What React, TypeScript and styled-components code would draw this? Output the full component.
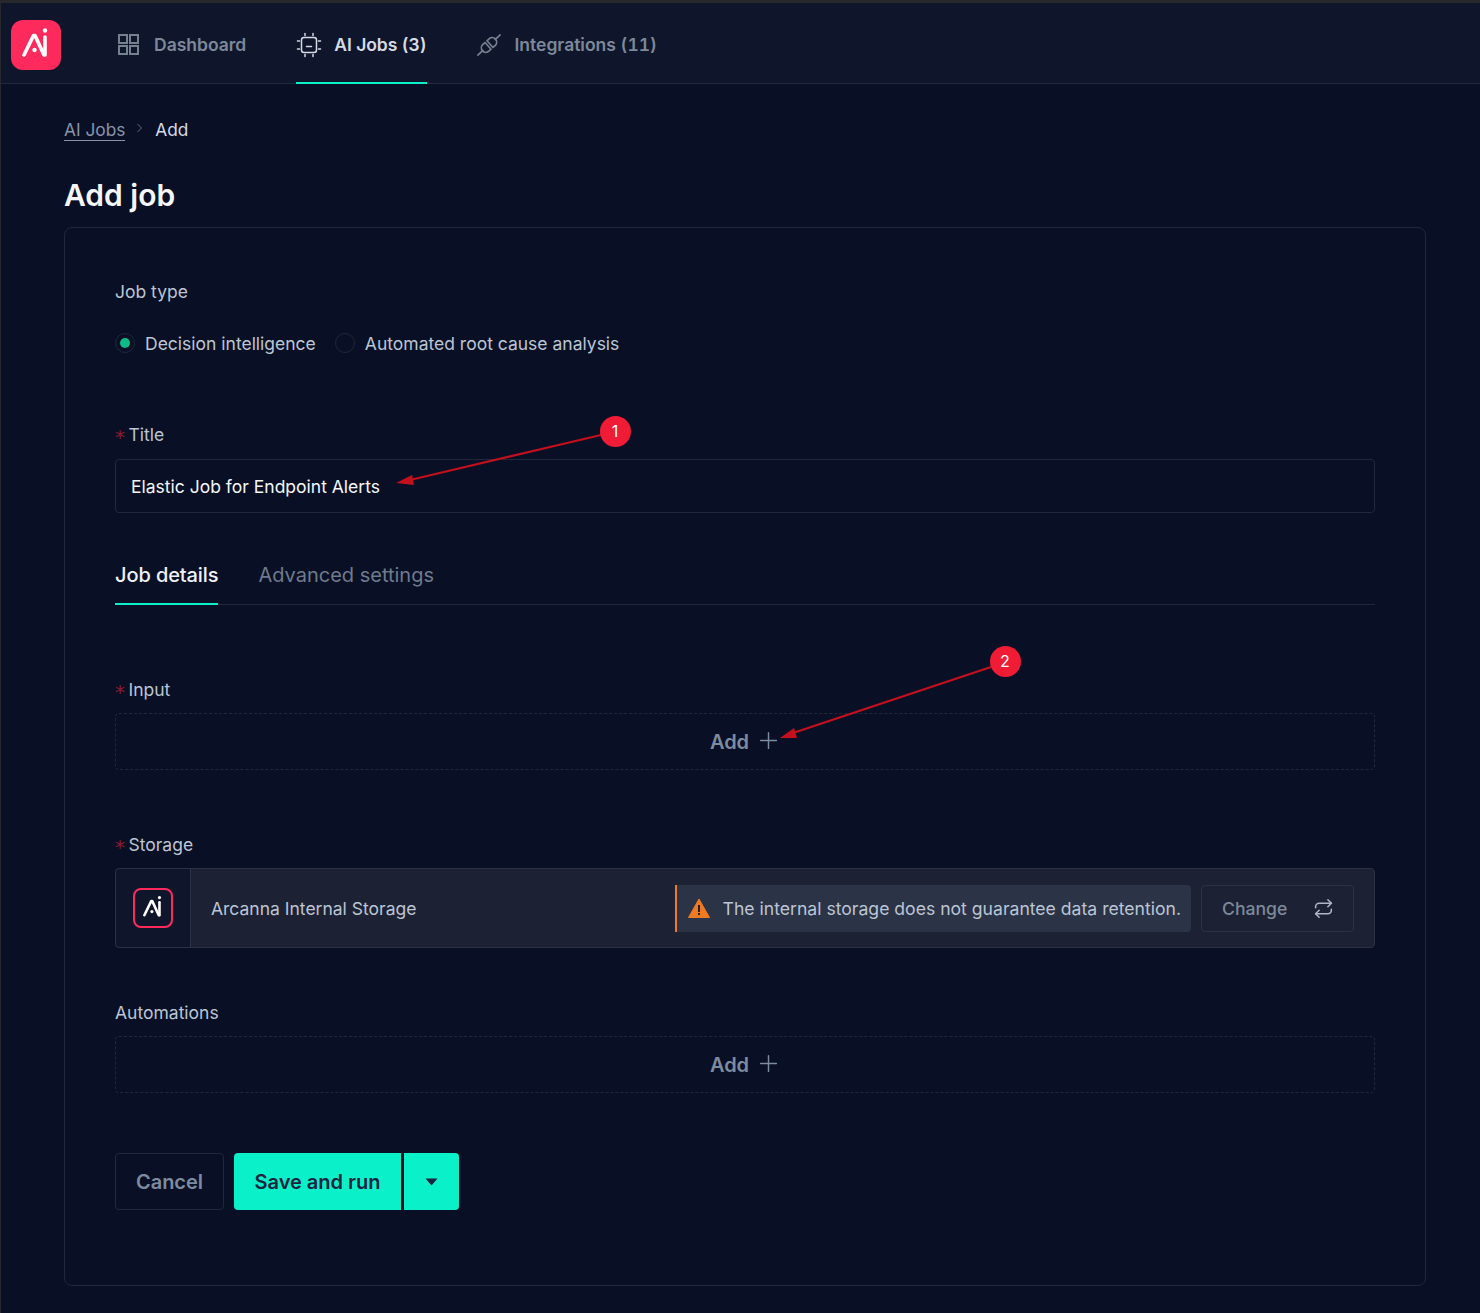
import React from "react";
import styled, { createGlobalStyle } from "styled-components";
import { Plus, Repeat } from "lucide-react";

const Logo = ({ size }: { size: number }) => (
  <svg width={size} height={size} viewBox="0 0 50 50" fill="none">
    <path d="M13 35 L22.5 15.5 L24 15.5 L33 35" stroke="#fff" strokeWidth="3.6" strokeLinecap="round" strokeLinejoin="round" />
    <path d="M34 35 V17" stroke="#fff" strokeWidth="3.6" strokeLinecap="round" />
    <circle cx="34" cy="10.5" r="2.2" fill="#fff" />
    <circle cx="23.5" cy="30" r="2.2" fill="#fff" />
  </svg>
);

const GridIcon = () => (
  <svg width="26" height="26" viewBox="0 0 26 26" fill="none" stroke="#76818f" strokeWidth="2">
    <rect x="3" y="3" width="8" height="8" />
    <rect x="14" y="3" width="8" height="8" />
    <rect x="3" y="14" width="8" height="8" />
    <rect x="14" y="14" width="8" height="8" />
  </svg>
);

const ChipIcon = () => (
  <svg width="26" height="26" viewBox="0 0 26 26" fill="none" stroke="#d5dbe5" strokeWidth="1.5" strokeLinecap="round">
    <rect x="5.5" y="5.5" width="15" height="15" rx="2.5" />
    <path d="M10.5 14.5h5" />
    <path d="M9 1.5v2M17 1.5v2M9 22.5v2M17 22.5v2M1.5 9h2M1.5 17h2M22.5 9h2M22.5 17h2" />
  </svg>
);

const PlugIcon = () => (
  <PlugSvg width="28" height="28" viewBox="-2 -2 28 28" fill="none" stroke="#76818f" strokeWidth="1.7" strokeLinecap="round" strokeLinejoin="round">
    <g transform="rotate(-42 12 12)">
      <path d="M-3 12H3.5" />
      <path d="M10.7 7.5H7.8a4.5 4.5 0 0 0 0 9h2.9z" />
      <path d="M13.3 7.5h2.9a4.5 4.5 0 0 1 0 9h-2.9z" />
      <path d="M20.5 12H27" />
    </g>
  </PlugSvg>
);

const WarnIcon = () => (
  <svg width="22" height="20" viewBox="0 0 22 20">
    <path d="M11 1 L21.5 19.5 H0.5 Z" fill="#f07a22" stroke="#f07a22" strokeLinejoin="round" />
    <rect x="10" y="7" width="2" height="7" fill="#1c2234" />
    <rect x="10" y="15" width="2" height="2" fill="#1c2234" />
  </svg>
);

const App = () => {
  return (
    <Page>
      <GlobalStyle />
      <TopBar>
        <LogoTile>
          <Logo size={50} />
        </LogoTile>
        <Nav>
          <NavItem>
            <GridIcon />
            Dashboard
          </NavItem>
          <NavItem $active>
            <ChipIcon />
            AI Jobs (3)
          </NavItem>
          <NavItem>
            <PlugIcon />
            Integrations (11)
          </NavItem>
        </Nav>
      </TopBar>

      <Content>
        <Breadcrumb>
          <CrumbLink>AI Jobs</CrumbLink>
          <CrumbSep>
            <svg width="7" height="10" viewBox="0 0 7 10" fill="none" stroke="#5f6a7c" strokeWidth="1">
              <path d="M1.5 1l4 4-4 4" />
            </svg>
          </CrumbSep>
          <CrumbCurrent>Add</CrumbCurrent>
        </Breadcrumb>
        <PageTitle>Add job</PageTitle>

        <Card>
          <JobTypeLabel>Job type</JobTypeLabel>
          <RadioRow>
            <RadioOption>
              <RadioDot $checked />
              Decision intelligence
            </RadioOption>
            <RadioOption>
              <RadioDot />
              Automated root cause analysis
            </RadioOption>
          </RadioRow>

          <TitleLabel>
            <Star>*</Star>Title
          </TitleLabel>
          <TextField>Elastic Job for Endpoint Alerts</TextField>

          <Tabs>
            <Tab $active>Job details</Tab>
            <Tab>Advanced settings</Tab>
          </Tabs>

          <InputLabel>
            <Star>*</Star>Input
          </InputLabel>
          <AddBox>
            Add <Plus size={27} strokeWidth={1.3} />
          </AddBox>

          <StorageLabel>
            <Star>*</Star>Storage
          </StorageLabel>
          <StorageBox>
            <StorageLogoCell>
              <StorageLogo>
                <Logo size={36} />
              </StorageLogo>
            </StorageLogoCell>
            <StorageName>Arcanna Internal Storage</StorageName>
            <Warning>
              <WarnIcon />
              The internal storage does not guarantee data retention.
            </Warning>
            <ChangeButton>
              Change <Repeat size={21} strokeWidth={1.8} color="#aeb6c4" />
            </ChangeButton>
          </StorageBox>

          <AutomationsLabel>Automations</AutomationsLabel>
          <AddBox>
            Add <Plus size={27} strokeWidth={1.3} />
          </AddBox>

          <Actions>
            <CancelButton>Cancel</CancelButton>
            <SaveButton>Save and run</SaveButton>
            <CaretButton>
              <svg width="13" height="8" viewBox="0 0 13 8">
                <path d="M0.5 0.5h12L6.5 7.5z" fill="#1a2440" />
              </svg>
            </CaretButton>
          </Actions>
        </Card>
      </Content>

      <Arrows width="1480" height="1313" viewBox="0 0 1480 1313">
        <path d="M601 435 L410 480" stroke="#c40f1c" strokeWidth="2.2" />
        <path d="M396 483 L412 475 L414 485 Z" fill="#c40f1c" />
        <path d="M991 667 L793 733" stroke="#c40f1c" strokeWidth="2.2" />
        <path d="M780 738 L794 728 L797 738 Z" fill="#c40f1c" />
      </Arrows>
      <Badge style={{ left: 600, top: 416 }}>1</Badge>
      <Badge style={{ left: 990, top: 646 }}>2</Badge>
    </Page>
  );
};

const GlobalStyle = createGlobalStyle`
  html, body {
    margin: 0;
    padding: 0;
    background: #091025;
    font-family: "Inter", "Noto Sans", sans-serif;
  }
  * {
    box-sizing: border-box;
  }
`;

const Page = styled.div`
  position: relative;
  width: 1480px;
  height: 1313px;
  overflow: hidden;
  background: #091025;
  border-top: 3px solid #27282c;
  border-left: 1px solid #27282c;
`;

const TopBar = styled.header`
  display: flex;
  align-items: center;
  height: 81px;
  padding-left: 10px;
  background: #0f162b;
  border-bottom: 1px solid #20283a;
`;

const LogoTile = styled.div`
  display: flex;
  width: 50px;
  height: 50px;
  margin-top: 4px;
  border-radius: 12px;
  background: #ff2a5c;
`;

const Nav = styled.nav`
  display: flex;
  height: 100%;
  margin-left: 55px;
  gap: 50px;
`;

const NavItem = styled.div<{ $active?: boolean }>`
  display: flex;
  align-items: center;
  gap: 12px;
  height: 81px;
  padding-top: 4px;
  font-size: 17.5px;
  font-weight: 600;
  font-variant-numeric: tabular-nums;
  letter-spacing: ${(p) => (p.$active ? "-0.1px" : "0")};
  color: ${(p) => (p.$active ? "#d5dbe5" : "#7d8899")};
  border-bottom: 2px solid ${(p) => (p.$active ? "#0af0c8" : "transparent")};
`;

const PlugSvg = styled.svg`
  margin-left: -2px;
`;

const Content = styled.main`
  padding: 35px 54px 0 63px;
`;

const Breadcrumb = styled.div`
  display: flex;
  align-items: center;
  height: 22px;
  font-size: 17.3px;
`;

const CrumbLink = styled.span`
  color: #8794a8;
  border-bottom: 1px solid #8794a8;
  line-height: 21px;
`;

const CrumbSep = styled.span`
  display: flex;
  margin: -4px 12px 0 11px;
`;

const CrumbCurrent = styled.span`
  margin-bottom: 2px;
  color: #d5dbe5;
`;

const PageTitle = styled.h1`
  margin: 36px 0 14px;
  font-size: 30px;
  line-height: 36px;
  font-weight: 600;
  color: #f4f6fa;
`;

const Card = styled.section`
  height: 1059px;
  padding: 53px 50px 0;
  border: 1px solid #20283a;
  border-radius: 8px;
`;

const FieldLabel = styled.div`
  display: flex;
  height: 22px;
  font-size: 17.5px;
  line-height: 22px;
  color: #bcc5d3;
`;

const JobTypeLabel = styled(FieldLabel)``;

const TitleLabel = styled(FieldLabel)`
  margin-top: 70px;
`;

const InputLabel = styled(FieldLabel)`
  margin-top: 74px;
`;

const StorageLabel = styled(FieldLabel)`
  margin-top: 64px;
`;

const AutomationsLabel = styled(FieldLabel)`
  margin-top: 54px;
`;

const Star = styled.span`
  width: 13.5px;
  font-family: "DejaVu Sans", sans-serif;
  font-size: 20px;
  line-height: 22px;
  color: #8b1c30;
  transform: translateY(2px);
`;

const RadioRow = styled.div`
  display: flex;
  gap: 19px;
  margin-top: 29px;
`;

const RadioOption = styled.label`
  display: flex;
  align-items: center;
  gap: 10px;
  height: 22px;
  font-size: 17.5px;
  color: #bcc5d3;
`;

const RadioDot = styled.span<{ $checked?: boolean }>`
  display: flex;
  align-items: center;
  justify-content: center;
  width: 20px;
  height: 20px;
  border: 1px solid #20283a;
  border-radius: 50%;

  &::after {
    content: "";
    display: ${(p) => (p.$checked ? "block" : "none")};
    width: 10px;
    height: 10px;
    border-radius: 50%;
    background: #12b886;
  }
`;

const TextField = styled.div`
  display: flex;
  align-items: center;
  height: 54px;
  margin-top: 13px;
  padding-left: 15px;
  font-size: 17.5px;
  color: #f4f6fa;
  border: 1px solid #20283a;
  border-radius: 4px;
`;

const Tabs = styled.div`
  display: flex;
  gap: 40px;
  height: 61px;
  margin-top: 31px;
  border-bottom: 1px solid #20283a;
`;

const Tab = styled.div<{ $active?: boolean }>`
  height: 61px;
  padding-top: 19px;
  font-size: 20px;
  line-height: 24px;
  letter-spacing: ${(p) => (p.$active ? "-0.1px" : "0")};
  font-weight: ${(p) => (p.$active ? 500 : 400)};
  color: ${(p) => (p.$active ? "#eef1f6" : "#6f7a8c")};
  border-bottom: 2px solid ${(p) => (p.$active ? "#0af0c8" : "transparent")};
`;

const AddBox = styled.div`
  display: flex;
  align-items: center;
  justify-content: center;
  gap: 6px;
  height: 57px;
  margin-top: 12px;
  padding-left: 2px;
  font-size: 20px;
  font-weight: 600;
  color: #7d8ba0;
  border: 1px dashed #20283a;
  border-radius: 4px;

  & svg {
    margin-top: -2px;
  }
`;

const StorageBox = styled.div`
  display: flex;
  align-items: center;
  height: 80px;
  margin-top: 12px;
  padding-right: 20px;
  background: #1c2234;
  border: 1px solid #2a3244;
  border-radius: 4px;
`;

const StorageLogoCell = styled.div`
  display: flex;
  align-items: center;
  justify-content: center;
  align-self: stretch;
  width: 75px;
  background: #0f162b;
  border-right: 1px solid #2a3244;
  border-radius: 4px 0 0 4px;
`;

const StorageLogo = styled.div`
  display: flex;
  align-items: center;
  justify-content: center;
  width: 40px;
  height: 40px;
  border: 2px solid #ff2a5c;
  border-radius: 8px;
`;

const StorageName = styled.div`
  flex: 1;
  padding-left: 20px;
  font-size: 17.5px;
  color: #bcc5d3;
`;

const Warning = styled.div`
  display: flex;
  align-items: center;
  gap: 13px;
  height: 47px;
  padding: 0 10px 0 11px;
  font-size: 17.6px;
  color: #bcc5d3;
  background: #2b3347;
  border-left: 2px solid #f07a22;
  border-radius: 0 4px 4px 0;
  white-space: nowrap;
`;

const ChangeButton = styled.div`
  display: flex;
  align-items: center;
  justify-content: space-between;
  width: 153px;
  height: 47px;
  margin-left: 10px;
  padding: 0 19px 0 20px;
  font-size: 17.6px;
  font-weight: 500;
  color: #7d8899;
  border: 1px solid #2a3244;
  border-radius: 4px;
`;

const Actions = styled.div`
  display: flex;
  align-items: stretch;
  height: 57px;
  margin-top: 60px;
`;

const CancelButton = styled.div`
  display: flex;
  align-items: center;
  justify-content: center;
  width: 109px;
  margin-right: 10px;
  font-size: 20px;
  font-weight: 600;
  color: #7d8ba0;
  border: 1px solid #20283a;
  border-radius: 4px;
`;

const SaveButton = styled.div`
  display: flex;
  align-items: center;
  justify-content: center;
  width: 167px;
  font-size: 20px;
  font-weight: 600;
  color: #1a2440;
  background: #0af0c8;
  border-radius: 4px 0 0 4px;
`;

const CaretButton = styled.div`
  display: flex;
  align-items: center;
  justify-content: center;
  width: 55px;
  margin-left: 3px;
  background: #0af0c8;
  border-radius: 0 4px 4px 0;
`;

const Arrows = styled.svg`
  position: absolute;
  left: -1px;
  top: -3px;
  pointer-events: none;
`;

const Badge = styled.div`
  position: absolute;
  display: flex;
  align-items: center;
  justify-content: center;
  width: 31px;
  height: 31px;
  margin: -3px 0 0 -1px;
  padding: 0 1px 1px 0;
  font-size: 16px;
  color: #fff;
  background: #f01c36;
  border-radius: 50%;
`;

export default App;
